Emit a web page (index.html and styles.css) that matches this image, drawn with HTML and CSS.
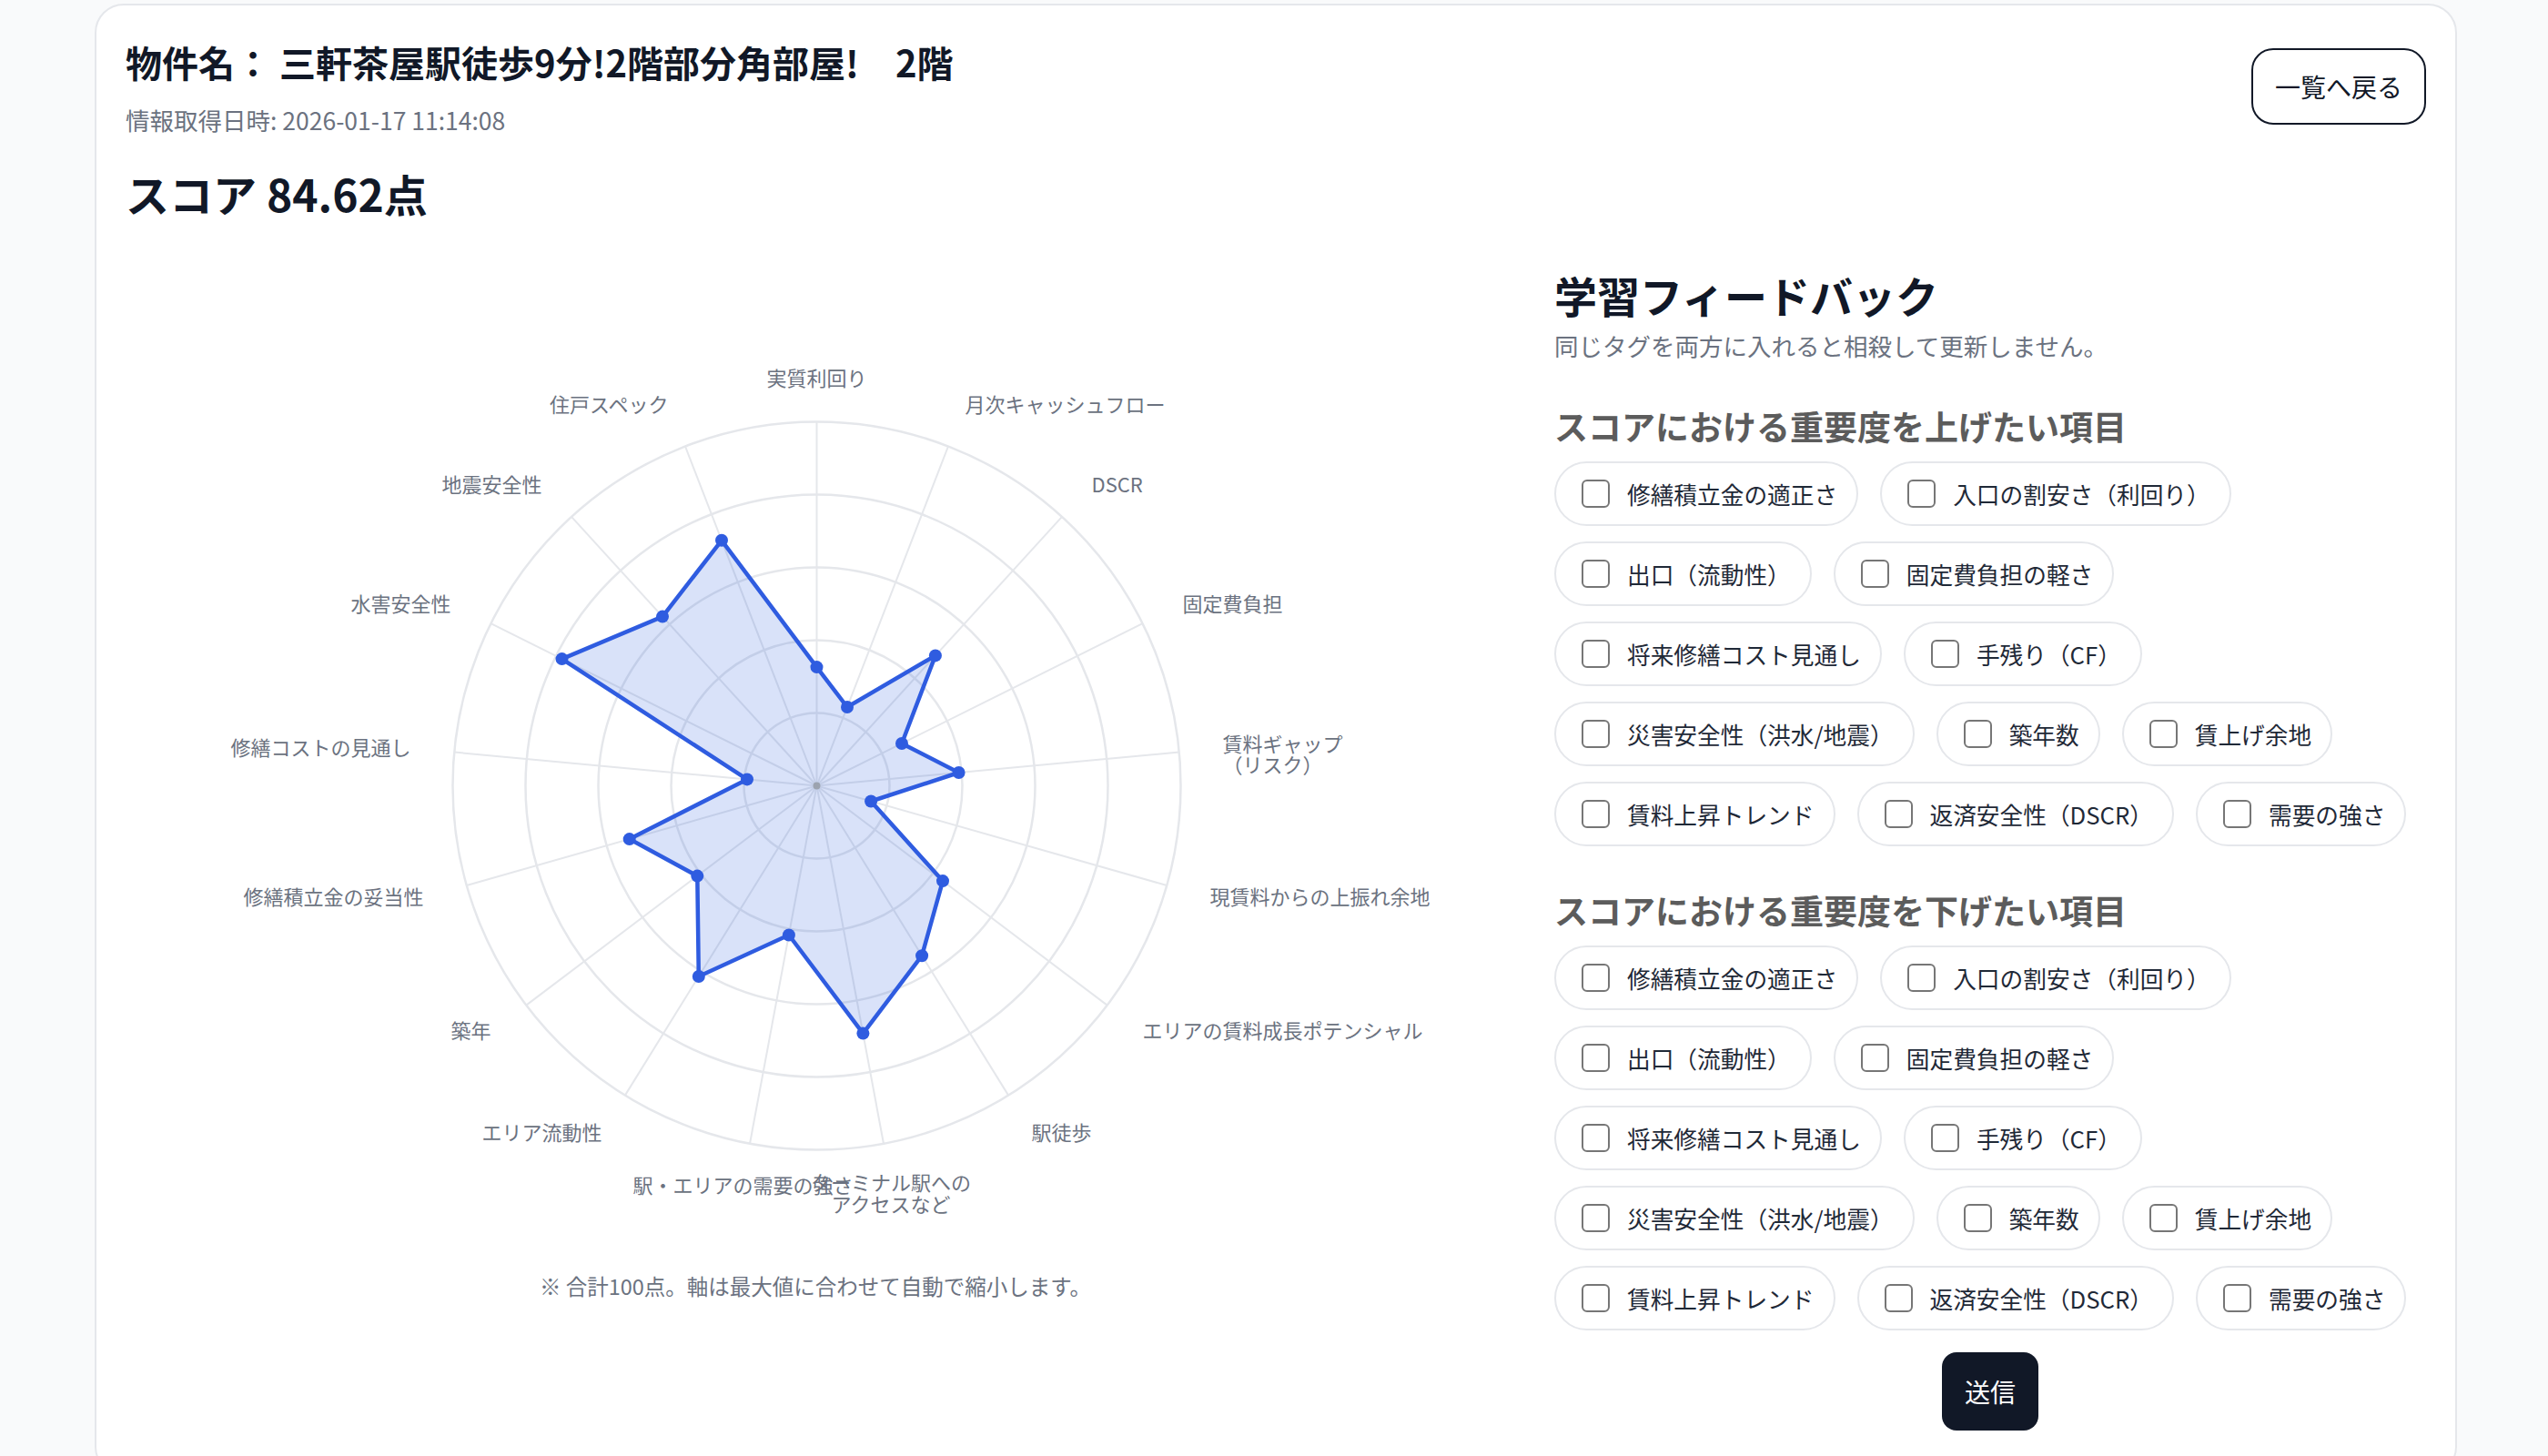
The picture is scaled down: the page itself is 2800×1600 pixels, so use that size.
FILE: index.html
```html
<!DOCTYPE html>
<html lang="ja">
<head>
<meta charset="utf-8">
<title>物件詳細</title>
<link rel="stylesheet" href="styles.css">
</head>
<body>
<div class="page">
  <main class="card">
    <header class="header">
      <div class="header-text">
        <h1 class="title">物件名： 三軒茶屋駅徒歩9分!2階部分角部屋!　2階</h1>
        <p class="fetched">情報取得日時: 2026-01-17 11:14:08</p>
      </div>
      <button class="back-btn" type="button">一覧へ戻る</button>
    </header>
    <h2 class="score">スコア 84.62点</h2>

    <div class="body-grid">
      <section class="chart-col">
        <svg class="radar" viewBox="0 0 1516 1080" width="1516" height="1080">
          <g class="rings">
            <circle cx="759.5" cy="571.5" r="80"/>
            <circle cx="759.5" cy="571.5" r="160"/>
            <circle cx="759.5" cy="571.5" r="240"/>
            <circle cx="759.5" cy="571.5" r="320"/>
            <circle cx="759.5" cy="571.5" r="400"/>
          </g>
          <g class="spokes">
            <line x1="759.5" y1="571.5" x2="759.5" y2="171.5"/>
            <line x1="759.5" y1="571.5" x2="904.0" y2="198.5"/>
            <line x1="759.5" y1="571.5" x2="1029.0" y2="275.9"/>
            <line x1="759.5" y1="571.5" x2="1117.6" y2="393.2"/>
            <line x1="759.5" y1="571.5" x2="1157.8" y2="534.6"/>
            <line x1="759.5" y1="571.5" x2="1144.2" y2="681.0"/>
            <line x1="759.5" y1="571.5" x2="1078.7" y2="812.6"/>
            <line x1="759.5" y1="571.5" x2="970.1" y2="911.6"/>
            <line x1="759.5" y1="571.5" x2="833.0" y2="964.7"/>
            <line x1="759.5" y1="571.5" x2="686.0" y2="964.7"/>
            <line x1="759.5" y1="571.5" x2="548.9" y2="911.6"/>
            <line x1="759.5" y1="571.5" x2="440.3" y2="812.6"/>
            <line x1="759.5" y1="571.5" x2="374.8" y2="681.0"/>
            <line x1="759.5" y1="571.5" x2="361.2" y2="534.6"/>
            <line x1="759.5" y1="571.5" x2="401.4" y2="393.2"/>
            <line x1="759.5" y1="571.5" x2="490.0" y2="275.9"/>
            <line x1="759.5" y1="571.5" x2="615.0" y2="198.5"/>
          </g>
          <polygon class="area" points="759.5,441.1 793.0,485.0 889.9,428.4 853.0,525.0 915.6,557.0 819.1,588.5 898.0,676.1 875.1,758.2 810.4,843.6 728.9,735.5 629.8,781.0 628.3,670.6 553.7,630.1 683.0,564.4 479.5,432.1 590.0,385.6 655.0,301.8"/>
          <circle class="center-dot" cx="759.5" cy="571.5" r="4"/>
          <g class="dots">
            <circle cx="759.5" cy="441.1" r="7"/>
            <circle cx="793.0" cy="485.0" r="7"/>
            <circle cx="889.9" cy="428.4" r="7"/>
            <circle cx="853.0" cy="525.0" r="7"/>
            <circle cx="915.6" cy="557.0" r="7"/>
            <circle cx="819.1" cy="588.5" r="7"/>
            <circle cx="898.0" cy="676.1" r="7"/>
            <circle cx="875.1" cy="758.2" r="7"/>
            <circle cx="810.4" cy="843.6" r="7"/>
            <circle cx="728.9" cy="735.5" r="7"/>
            <circle cx="629.8" cy="781.0" r="7"/>
            <circle cx="628.3" cy="670.6" r="7"/>
            <circle cx="553.7" cy="630.1" r="7"/>
            <circle cx="683.0" cy="564.4" r="7"/>
            <circle cx="479.5" cy="432.1" r="7"/>
            <circle cx="590.0" cy="385.6" r="7"/>
            <circle cx="655.0" cy="301.8" r="7"/>
          </g>
          <g class="labels">
            <text class="mid" x="759.5" y="122">実質利回り</text>
            <text class="start" x="922.5" y="151.4">月次キャッシュフロー</text>
            <text class="start" x="1061.5" y="239">DSCR</text>
            <text class="start" x="1161.5" y="370">固定費負担</text>
            <text class="start" x="1205.5" y="523.7">賃料ギャップ</text>
            <text class="start" x="1205.5" y="547">（リスク）</text>
            <text class="start" x="1191.5" y="691.6">現賃料からの上振れ余地</text>
            <text class="start" x="1117.5" y="839">エリアの賃料成長ポテンシャル</text>
            <text class="start" x="995.5" y="950.5">駅徒歩</text>
            <text class="mid" x="841" y="1006">ターミナル駅への</text>
            <text class="mid" x="841" y="1029.5">アクセスなど</text>
            <text class="start" x="557.5" y="1008.5">駅・エリアの需要の強さ</text>
            <text class="end" x="523.5" y="950.5">エリア流動性</text>
            <text class="end" x="401.5" y="839">築年</text>
            <text class="end" x="327.5" y="691.6">修繕積立金の妥当性</text>
            <text class="end" x="313.5" y="528">修繕コストの見通し</text>
            <text class="end" x="357.5" y="370">水害安全性</text>
            <text class="end" x="457.5" y="239">地震安全性</text>
            <text class="end" x="596.5" y="151.4">住戸スペック</text>
          </g>
        </svg>
        <p class="note">※ 合計100点。軸は最大値に合わせて自動で縮小します。</p>
      </section>

      <section class="feedback">
        <h2 class="fb-title">学習フィードバック</h2>
        <p class="fb-sub">同じタグを両方に入れると相殺して更新しません。</p>

        <h3 class="fb-heading">スコアにおける重要度を上げたい項目</h3>
        <div class="chips">
          <label class="chip"><input type="checkbox">修繕積立金の適正さ</label>
          <label class="chip"><input type="checkbox">入口の割安さ（利回り）</label>
          <label class="chip"><input type="checkbox">出口（流動性）</label>
          <label class="chip"><input type="checkbox">固定費負担の軽さ</label>
          <label class="chip"><input type="checkbox">将来修繕コスト見通し</label>
          <label class="chip"><input type="checkbox">手残り（CF）</label>
          <label class="chip"><input type="checkbox">災害安全性（洪水/地震）</label>
          <label class="chip"><input type="checkbox">築年数</label>
          <label class="chip"><input type="checkbox">賃上げ余地</label>
          <label class="chip"><input type="checkbox">賃料上昇トレンド</label>
          <label class="chip"><input type="checkbox">返済安全性（DSCR）</label>
          <label class="chip"><input type="checkbox">需要の強さ</label>
        </div>

        <h3 class="fb-heading second">スコアにおける重要度を下げたい項目</h3>
        <div class="chips">
          <label class="chip"><input type="checkbox">修繕積立金の適正さ</label>
          <label class="chip"><input type="checkbox">入口の割安さ（利回り）</label>
          <label class="chip"><input type="checkbox">出口（流動性）</label>
          <label class="chip"><input type="checkbox">固定費負担の軽さ</label>
          <label class="chip"><input type="checkbox">将来修繕コスト見通し</label>
          <label class="chip"><input type="checkbox">手残り（CF）</label>
          <label class="chip"><input type="checkbox">災害安全性（洪水/地震）</label>
          <label class="chip"><input type="checkbox">築年数</label>
          <label class="chip"><input type="checkbox">賃上げ余地</label>
          <label class="chip"><input type="checkbox">賃料上昇トレンド</label>
          <label class="chip"><input type="checkbox">返済安全性（DSCR）</label>
          <label class="chip"><input type="checkbox">需要の強さ</label>
        </div>

        <div class="submit-row">
          <button class="submit" type="button">送信</button>
        </div>
      </section>
    </div>
  </main>
</div>
</body>
</html>
```

FILE: styles.css
```css
* {
  box-sizing: border-box;
}

body {
  margin: 0;
  background: #f9fafb;
  font-family: "Noto Sans CJK JP", "Noto Sans", sans-serif;
  color: #111827;
}

.page {
  padding: 4px 0 0 104px;
}

.card {
  width: 2596px;
  background: #ffffff;
  border: 2px solid #e5e7eb;
  border-radius: 32px;
  padding: 34px 32px 48px;
}

.header {
  display: flex;
  justify-content: space-between;
  align-items: center;
}

.title {
  margin: 0;
  font-size: 40px;
  line-height: 56px;
  font-weight: 700;
  color: #111827;
}

.fetched {
  margin: 18px 0 0;
  font-size: 26.5px;
  line-height: 36px;
  color: #6b7280;
}

.back-btn {
  height: 84px;
  padding: 0 24px;
  border: 2px solid #111827;
  border-radius: 24px;
  background: #ffffff;
  font-family: "Noto Sans CJK JP", "Noto Sans", sans-serif;
  font-size: 28px;
  color: #111827;
}

.score {
  margin: 30px 0 0;
  font-size: 48px;
  line-height: 64px;
  font-weight: 700;
  color: #111827;
}

.body-grid {
  display: grid;
  grid-template-columns: 1fr 958px;
  column-gap: 54px;
  margin-top: 48px;
}

.radar {
  display: block;
  width: 1516px;
  height: 1080px;
}

.rings circle {
  fill: none;
  stroke: #e5e7eb;
  stroke-width: 2.5;
}

.spokes line {
  stroke: #e5e7eb;
  stroke-width: 2;
}

.area {
  fill: rgba(47, 92, 224, 0.18);
  stroke: #2f5ce0;
  stroke-width: 4.5;
  stroke-linejoin: round;
}

.dots circle {
  fill: #2f5ce0;
}

.center-dot {
  fill: #9ca3af;
}

.labels text {
  font-family: "Noto Sans CJK JP", "Noto Sans", sans-serif;
  font-size: 22px;
  fill: #6b7280;
  dominant-baseline: central;
}

.labels .start {
  text-anchor: start;
}

.labels .end {
  text-anchor: end;
}

.labels .mid {
  text-anchor: middle;
}

.note {
  margin: 24px 0 0;
  text-align: center;
  font-size: 23.5px;
  line-height: 34px;
  color: #6b7280;
}

.fb-title {
  margin: 0;
  font-size: 47px;
  line-height: 64px;
  font-weight: 700;
  color: #111827;
}

.fb-sub {
  margin: 4px 0 0;
  font-size: 26.5px;
  line-height: 40px;
  color: #6b7280;
}

.fb-heading {
  margin: 42px 0 0;
  font-size: 37px;
  line-height: 52px;
  font-weight: 700;
  color: #5c5c5c;
}

.fb-heading.second {
  margin-top: 44px;
}

.chips {
  display: flex;
  flex-wrap: wrap;
  column-gap: 24px;
  row-gap: 17px;
  margin-top: 13px;
}

.chip {
  display: inline-flex;
  align-items: center;
  gap: 19px;
  height: 71px;
  padding: 0 21px 0 22px;
  border: 2px solid #e5e7eb;
  border-radius: 999px;
  background: #ffffff;
  font-size: 25.7px;
  line-height: 36px;
  color: #1f2937;
}

.chip input {
  appearance: none;
  -webkit-appearance: none;
  flex: none;
  width: 31px;
  height: 31px;
  margin: 0 0 0 6px;
  border: 2.5px solid #767676;
  border-radius: 6px;
  background: #ffffff;
}

.submit-row {
  display: flex;
  justify-content: center;
  margin-top: 24px;
}

.submit {
  height: 86px;
  padding: 0 25px;
  border: none;
  border-radius: 16px;
  background: #111827;
  color: #ffffff;
  font-family: "Noto Sans CJK JP", "Noto Sans", sans-serif;
  font-size: 28px;
}
```
